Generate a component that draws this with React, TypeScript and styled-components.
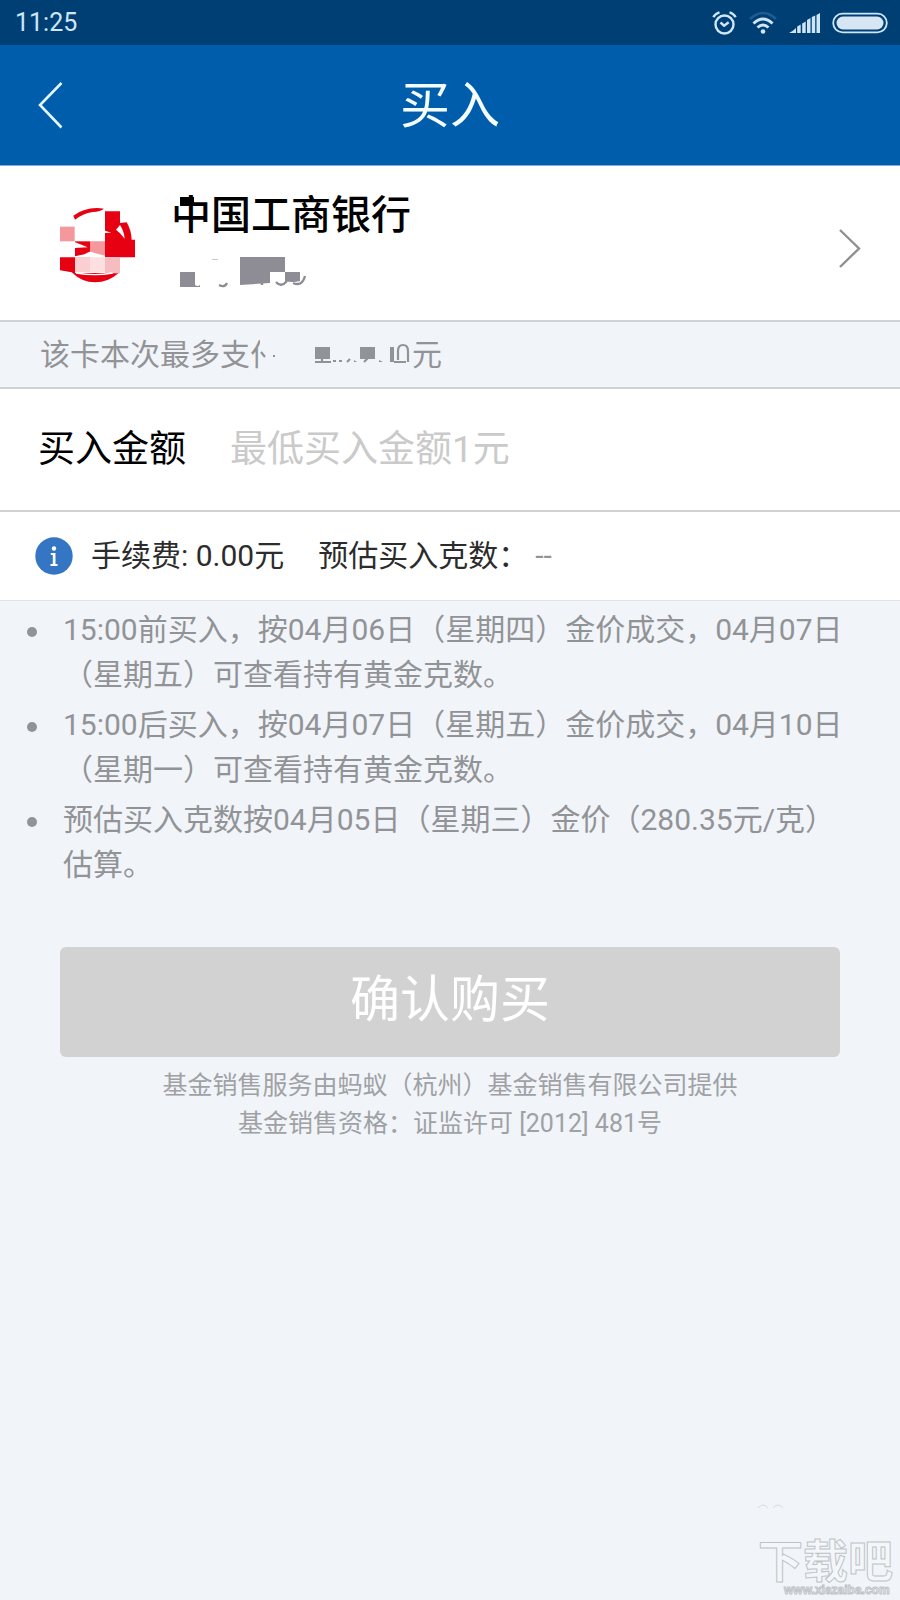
import React from "react";
import styled, { createGlobalStyle } from "styled-components";

const GlobalStyle = createGlobalStyle`
  *, *::before, *::after { box-sizing: border-box; }
  body {
    margin: 0;
    background: #f1f5f9;
    font-family: Roboto, "Noto Sans CJK SC", sans-serif;
  }
  button, input { font-family: inherit; }
`;

const Page = styled.div`
  min-height: 100vh;
  display: flex;
  flex-direction: column;
  background: #f1f5f9;
`;

const StatusBar = styled.div`
  height: 45px;
  padding: 0 12px 0 15px;
  display: flex;
  align-items: center;
  justify-content: space-between;
  background: #003f74;
  color: #cfe6f8;
  font-size: 25px;
  line-height: 45px;
`;

const StatusIcons = styled.div`
  display: flex;
  align-items: center;
  gap: 12px;
`;

const Header = styled.header`
  height: 121px;
  padding: 0 36px;
  display: grid;
  grid-template-columns: 60px 1fr 60px;
  align-items: center;
  background: #005dac;
  border-bottom: 1px solid #7fadd5;
`;

const IconButton = styled.button`
  display: flex;
  padding: 0;
  border: 0;
  background: none;
  color: #e4f6ff;
`;

const Title = styled.h1`
  margin: 0;
  padding-top: 2px;
  text-align: center;
  color: #f4fdff;
  font-size: 50px;
  line-height: 60px;
  font-weight: 400;
`;

const BankRow = styled.button`
  height: 156px;
  padding: 4px 38px 0 60px;
  display: flex;
  align-items: center;
  border: 0;
  border-bottom: 2px solid #d0d1d3;
  background: #fff;
  text-align: left;
`;

const BankInfo = styled.span`
  flex: 1;
  padding: 0 0 11px 35px;
  display: flex;
  flex-direction: column;
  gap: 17px;
`;

const BankName = styled.span`
  color: #000;
  font-size: 40px;
  line-height: 48px;
  font-weight: 500;
`;

const LimitRow = styled.div`
  height: 67px;
  padding: 0 40px;
  display: flex;
  align-items: center;
  border-bottom: 2px solid #d0d1d3;
  color: #929396;
  font-size: 30px;
  line-height: 44px;
`;

const LimitMask = styled.svg`
  margin-left: -20px;
`;

const AmountRow = styled.div`
  height: 123px;
  padding: 0 38px;
  display: flex;
  align-items: center;
  gap: 44px;
  border-bottom: 2px solid #d0d1d3;
  background: #fff;
  font-size: 37px;
  line-height: 56px;
`;

const AmountInput = styled.input`
  flex: 1;
  min-width: 0;
  padding: 0;
  border: 0;
  outline: 0;
  background: none;
  color: #000;
  font-size: 37px;
  line-height: 56px;
  &::placeholder { color: #cacaca; opacity: 1; }
`;

const FeeRow = styled.div`
  height: 89px;
  padding: 0 35px;
  display: flex;
  align-items: center;
  border-bottom: 1px solid #e2e3e5;
  background: #fff;
  color: #2c2c2c;
  font-size: 30px;
  line-height: 44px;
`;

const Fee = styled.span`
  margin: 0 34px 0 18px;
`;

const Estimate = styled.span`
  color: #929396;
  margin-left: 7px;
`;

const Notes = styled.ul`
  margin: 0;
  padding: 6px 55px 0 27px;
  display: flex;
  flex-direction: column;
  gap: 5px;
  list-style: none;
`;

const Note = styled.li`
  display: grid;
  grid-template-columns: 36px 1fr;
  color: #929396;
  font-size: 30px;
  line-height: 45px;
  &::before {
    content: "";
    width: 10px;
    height: 10px;
    margin-top: 20px;
    border-radius: 50%;
    background: #929396;
  }
`;

const ConfirmButton = styled.button`
  height: 110px;
  margin: 60px 60px 0;
  padding: 0 0 4px;
  border: 0;
  border-radius: 6px;
  background: #d2d2d2;
  color: #fff;
  font-size: 50px;
  line-height: 60px;
`;

const Footer = styled.p`
  margin: 10px 0 0;
  text-align: center;
  color: #a0a1a4;
  font-size: 25px;
  line-height: 38px;
`;

const Watermark = styled.svg`
  margin: auto 4px 0 0;
  align-self: flex-end;
`;

const AlarmIcon = () => (
  <svg width="26" height="26" viewBox="0 0 26 26" fill="none" stroke="#cfe6f8" strokeWidth="2.4" aria-hidden="true">
    <circle cx="13.500" cy="14.5" r="9" />
    <path d="M9.500 12.5l3.6 3.2 4.6-3.4" />
    <path d="M2.300 7.2Q4.500 3.5 8.500 2.4M24.700 7.2Q22.500 3.5 18.500 2.4" />
  </svg>
);

const WifiIcon = () => (
  <svg width="28" height="24" viewBox="0 0 28 24" fill="none" aria-hidden="true">
    <path d="M1 8Q14 -4 27 8" stroke="#1e5c92" strokeWidth="2.4" />
    <path d="M4.5 12.5Q14 3.500 23.500 12.5" stroke="#cfe6f8" strokeWidth="3" />
    <path d="M8.500 16.500Q14 11.500 19.500 16.500" stroke="#cfe6f8" strokeWidth="3" />
    <circle cx="14" cy="20.500" r="2.300" fill="#cfe6f8" />
  </svg>
);

const SignalIcon = () => (
  <svg width="31" height="20" viewBox="0 0 31 20" fill="#cfe6f8" aria-hidden="true">
    <path d="M0 20Q3 19 7 15V20Z" />
    <path d="M8.200 13.500L11.700 11.500V20H8.200ZM13.200 10.500L16.700 8.500V20H13.200ZM18 7L21.500 5V20H18ZM22.800 4L26.200 2.500V20H22.800ZM27.500 2L31 0V20H27.500Z" />
  </svg>
);

const BatteryIcon = () => (
  <svg width="56" height="22" viewBox="0 0 56 22" aria-hidden="true">
    <rect x="1.200" y="1.700" width="53.600" height="18.600" rx="9.300" fill="none" stroke="#cfe6f8" strokeWidth="1.800" />
    <rect x="4.500" y="4.500" width="47" height="13" rx="6.500" fill="#d6e6f2" />
  </svg>
);

const BackIcon = () => (
  <svg width="28" height="48" viewBox="0 0 28 48" fill="none" stroke="currentColor" strokeWidth="2.600" aria-hidden="true">
    <path d="M25.500 2L4 24L25.500 46.500" />
  </svg>
);

const ForwardIcon = () => (
  <svg width="24" height="48" viewBox="0 0 24 48" fill="none" stroke="#8f9092" strokeWidth="2.400" aria-hidden="true">
    <path d="M2 9L21 27.500L2 46" />
  </svg>
);

const BankLogo = () => (
  <svg width="76" height="76" viewBox="90 110 228 228" aria-hidden="true">
    <path d="M130 136Q170 107 222 115Q212 123 188 125Q158 130 135 148Z" fill="#e60012" />
    <rect x="90" y="169" width="44" height="44" fill="#f5989d" />
    <path d="M225 123H270V158L290 156Q304 180 305 208H315V261H225V188L244 187L225 181Z" fill="#e60012" />
    <path d="M270 164L258 178L270 189L284 205Q282 182 270 164Z" fill="#fff" />
    <path d="M135 213H180V261H135Z" fill="#e60012" />
    <path d="M180 213H225V256L180 244Z" fill="#f5989d" />
    <path d="M134 215L173 231L134 233ZM163 252L178 244L212 255L180 261H135V258Z" fill="#fff" />
    <path d="M90 261H135V308H266Q235 336 195 336Q155 336 125 306L90 300Z" fill="#e60012" />
    <rect x="135" y="261" width="45" height="45" fill="#f9cfd2" />
    <rect x="180" y="261" width="45" height="45" fill="#fbdfe1" />
    <rect x="225" y="261" width="45" height="48" fill="#f6bdc1" />
    <path d="M138 308Q195 318 248 308" fill="none" stroke="#fff" strokeWidth="4" />
  </svg>
);

const BankNameMask = styled.svg`
  position: absolute;
  left: 0;
  top: 0;
`;

const MaskedName = styled(BankName)`
  position: relative;
`;

const CardNumberMask = () => (
  <svg width="136" height="31" viewBox="-5 0 136 31" fill="#8e8d95" role="img" aria-label="卡号已隐藏">
    <path d="M4 15H19V28Q22 30 24 28V30H4ZM64 0H109V15H124V24Q116 26 109 24V15H94V26L64 28Z" />
    <path d="M36 2.500H42" stroke="#c9c9cd" strokeWidth="1" />
    <path d="M43 28Q49 31 51 26M86 25V28M100 25Q105 31 111 24M117 26Q126 30 129 19" fill="none" stroke="#8e8d95" strokeWidth="2.400" />
  </svg>
);

const InfoIcon = () => (
  <svg width="38" height="38" viewBox="0 0 38 38" aria-hidden="true">
    <circle cx="19" cy="19" r="18.700" fill="#3475c4" />
    <circle cx="19" cy="11.500" r="2.200" fill="#fff" />
    <path d="M15.800 16H20.500V27H22.500V29H15.500V27H17.800V18H15.800Z" fill="#fff" />
  </svg>
);

const notes = [
  "15:00前买入，按04月06日（星期四）金价成交，04月07日（星期五）可查看持有黄金克数。",
  "15:00后买入，按04月07日（星期五）金价成交，04月10日（星期一）可查看持有黄金克数。",
  "预估买入克数按04月05日（星期三）金价（280.35元/克）估算。",
];

export default function App() {
  return (
    <Page>
      <GlobalStyle />
      <StatusBar>
        <span>11:25</span>
        <StatusIcons>
          <AlarmIcon />
          <WifiIcon />
          <SignalIcon />
          <BatteryIcon />
        </StatusIcons>
      </StatusBar>
      <Header>
        <IconButton type="button" aria-label="返回">
          <BackIcon />
        </IconButton>
        <Title>买入</Title>
      </Header>
      <BankRow type="button">
        <BankLogo />
        <BankInfo>
          <MaskedName>
            中国工商银行
            <BankNameMask width="40" height="48" viewBox="0 0 40 48" aria-hidden="true">
              <path d="M0 0H9V14H0Z" fill="#fff" />
              <path d="M9 5H23V14H9Z" fill="#000" />
            </BankNameMask>
          </MaskedName>
          <CardNumberMask />
        </BankInfo>
        <ForwardIcon />
      </BankRow>
      <LimitRow>
        <span>该卡本次最多支付</span>
        <LimitMask width="152" height="44" viewBox="0 0 152 44" role="img" aria-label="金额已隐藏">
          <rect x="-3" width="155" height="44" fill="#f1f5f9" />
          <path d="M55 14H70V26H55ZM100 14H115V26H100ZM130 14H134V29H130ZM13 22H15V24H13ZM73 27H76V29H73ZM79 27H82V29H79ZM94 27L97 29H94ZM119 27L123 29H119Z" fill="#929396" />
          <path d="M1 19L5 24M55 29H71M62 26V29M87 29L90 26M104 29L108 25M134 29H146M138 27V18Q138 12 143 12Q148 12 148 18V29" fill="none" stroke="#929396" strokeWidth="2.200" />
        </LimitMask>
        <span>元</span>
      </LimitRow>
      <AmountRow>
        <label htmlFor="amount">买入金额</label>
        <AmountInput id="amount" inputMode="decimal" placeholder="最低买入金额1元" />
      </AmountRow>
      <FeeRow>
        <InfoIcon />
        <Fee>手续费: 0.00元</Fee>
        <span>预估买入克数：</span>
        <Estimate>--</Estimate>
      </FeeRow>
      <Notes>
        {notes.map((note) => (
          <Note key={note}>{note}</Note>
        ))}
      </Notes>
      <ConfirmButton type="button" disabled>
        确认购买
      </ConfirmButton>
      <Footer>
        基金销售服务由蚂蚁（杭州）基金销售有限公司提供
        <br />
        基金销售资格：证监许可 [2012] 481号
      </Footer>
      <Watermark width="138" height="100" viewBox="0 0 138 100" fill="#f4f7fa" stroke="#bfc3c7">
        <path d="M0 8Q5 2 10 8M15 8Q20 2 25 8" fill="none" stroke="#d8dcdf" />
        <text x="0" y="78" fontSize="45" fontWeight="700" fontFamily="'Noto Sans CJK SC', sans-serif">下载吧</text>
        <text x="26" y="94" fontSize="12" fontWeight="700" fontFamily="'Liberation Sans', sans-serif" strokeWidth="1">www.xiazaiba.com</text>
      </Watermark>
    </Page>
  );
}
